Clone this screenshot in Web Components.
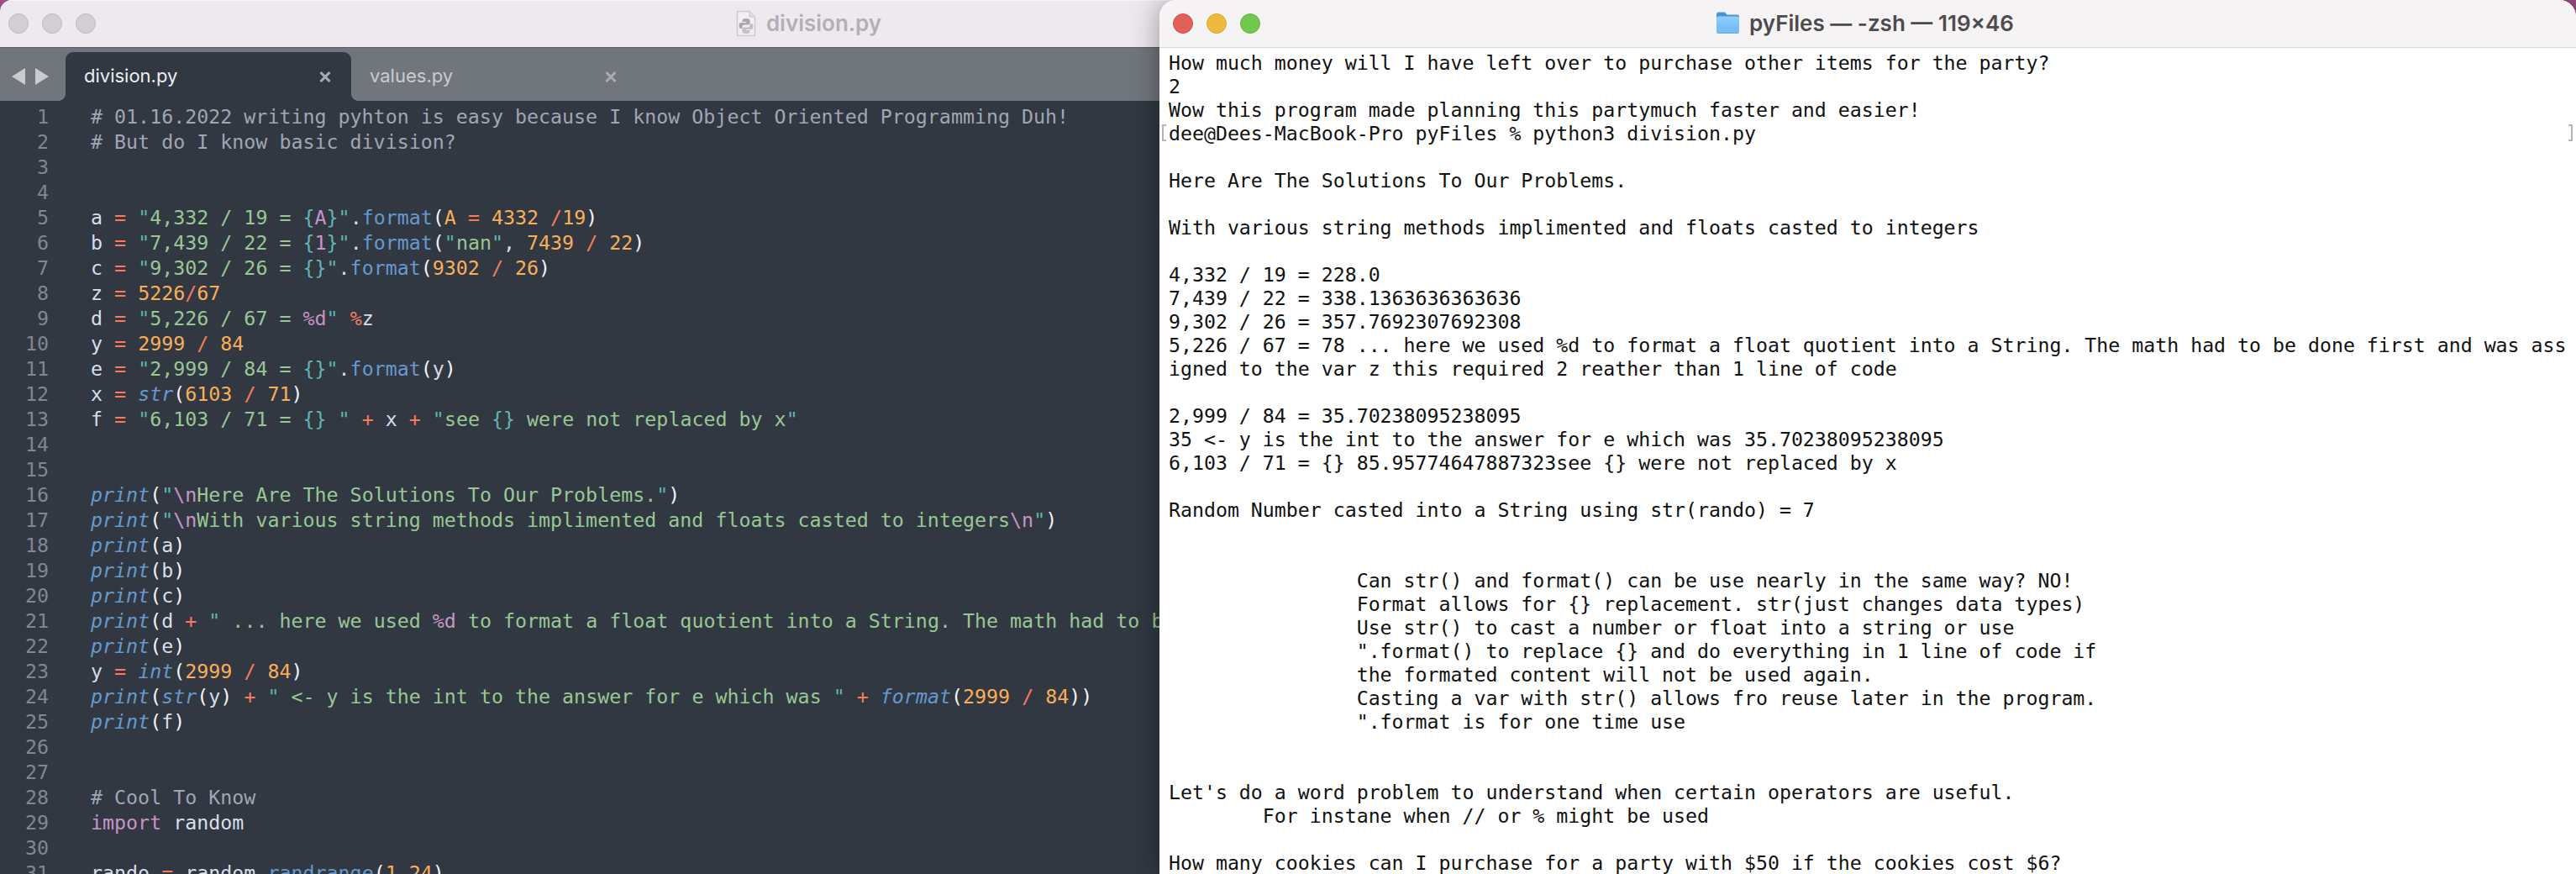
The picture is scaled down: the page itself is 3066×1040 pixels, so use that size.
<!DOCTYPE html>
<html>
<head>
<meta charset="utf-8">
<title>division.py</title>
<style>
  html, body { margin: 0; padding: 0; height: 100%; overflow: hidden; background: #9e4c87; }
</style>
</head>
<body>

<mac-desktop>
  <editor-window file="division.py"></editor-window>
  <terminal-window heading="pyFiles — -zsh — 119×46">How much money will I have left over to purchase other items for the party?
2
Wow this program made planning this partymuch faster and easier!
dee@Dees-MacBook-Pro pyFiles % python3 division.py

Here Are The Solutions To Our Problems.

With various string methods implimented and floats casted to integers

4,332 / 19 = 228.0
7,439 / 22 = 338.1363636363636
9,302 / 26 = 357.7692307692308
5,226 / 67 = 78 ... here we used %d to format a float quotient into a String. The math had to be done first and was ass
igned to the var z this required 2 reather than 1 line of code

2,999 / 84 = 35.70238095238095
35 &lt;- y is the int to the answer for e which was 35.70238095238095
6,103 / 71 = {} 85.95774647887323see {} were not replaced by x

Random Number casted into a String using str(rando) = 7


                Can str() and format() can be use nearly in the same way? NO!
                Format allows for {} replacement. str(just changes data types)
                Use str() to cast a number or float into a string or use
                ".format() to replace {} and do everything in 1 line of code if
                the formated content will not be used again.
                Casting a var with str() allows fro reuse later in the program.
                ".format is for one time use


Let's do a word problem to understand when certain operators are useful.
        For instane when // or % might be used

How many cookies can I purchase for a party with $50 if the cookies cost $6?</terminal-window>
</mac-desktop>

<script>
const MONO = '"DejaVu Sans Mono", "Liberation Mono", monospace';

// ‹x text› = token of class x
const CODE = [
  '‹c # 01.16.2022 writing pyhton is easy because I know Object Oriented Programming Duh!›',
  '‹c # But do I know basic division?›',
  '',
  '',
  '‹v a› ‹o =› ‹q "›‹s 4,332 / 19 = ›‹q {›‹p A›‹q }"›‹v .›‹f format›‹w (›‹n A› ‹o =› ‹n 4332› ‹o /›‹n 19›‹w )›',
  '‹v b› ‹o =› ‹q "›‹s 7,439 / 22 = ›‹q {›‹p 1›‹q }"›‹v .›‹f format›‹w (›‹q "›‹s nan›‹q "›‹v ,› ‹n 7439› ‹o /› ‹n 22›‹w )›',
  '‹v c› ‹o =› ‹q "›‹s 9,302 / 26 = ›‹q {}"›‹v .›‹f format›‹w (›‹n 9302› ‹o /› ‹n 26›‹w )›',
  '‹v z› ‹o =› ‹n 5226›‹o /›‹n 67›',
  '‹v d› ‹o =› ‹q "›‹s 5,226 / 67 = ›‹p %d›‹q "› ‹o %›‹v z›',
  '‹v y› ‹o =› ‹n 2999› ‹o /› ‹n 84›',
  '‹v e› ‹o =› ‹q "›‹s 2,999 / 84 = ›‹q {}"›‹v .›‹f format›‹w (›‹v y›‹w )›',
  '‹v x› ‹o =› ‹i str›‹w (›‹n 6103› ‹o /› ‹n 71›‹w )›',
  '‹v f› ‹o =› ‹q "›‹s 6,103 / 71 = ›‹q {}›‹s  ›‹q "› ‹o +› ‹v x› ‹o +› ‹q "›‹s see ›‹q {}›‹s  were not replaced by x›‹q "›',
  '',
  '',
  '‹i print›‹w (›‹q "›‹p \\n›‹s Here Are The Solutions To Our Problems.›‹q "›‹w )›',
  '‹i print›‹w (›‹q "›‹p \\n›‹s With various string methods implimented and floats casted to integers›‹p \\n›‹q "›‹w )›',
  '‹i print›‹w (›‹v a›‹w )›',
  '‹i print›‹w (›‹v b›‹w )›',
  '‹i print›‹w (›‹v c›‹w )›',
  '‹i print›‹w (›‹v d› ‹o +› ‹q "›‹s  ... here we used ›‹p %d›‹s  to format a float quotient into a String. The math had to be›',
  '‹i print›‹w (›‹v e›‹w )›',
  '‹v y› ‹o =› ‹i int›‹w (›‹n 2999› ‹o /› ‹n 84›‹w )›',
  '‹i print›‹w (›‹i str›‹w (›‹v y›‹w )› ‹o +› ‹q "›‹s  &lt;- y is the int to the answer for e which was ›‹q "› ‹o +› ‹i format›‹w (›‹n 2999› ‹o /› ‹n 84›‹w ))›',
  '‹i print›‹w (›‹v f›‹w )›',
  '',
  '',
  '‹c # Cool To Know›',
  '‹p import› ‹v random›',
  '',
  '‹v rando› ‹o =› ‹v random.›‹f randrange›‹w (›‹n 1›‹v ,›‹n 24›‹w )›',
];

class MacDesktop extends HTMLElement {
  constructor() {
    super();
    this.attachShadow({ mode: 'open' }).innerHTML = `
      <style>
        :host { display: block; position: relative; width: 3066px; height: 1040px; overflow: hidden; background: #9e4c87; }
      </style>
      <slot></slot>`;
  }
}

class TrafficLights extends HTMLElement {
  constructor() {
    super();
    const dim = this.hasAttribute('inactive');
    const col = dim ? ['#d3cfd5', '#d3cfd5', '#d3cfd5'] : ['#e2605a', '#eeba3e', '#72c84f'];
    const edge = dim ? ['#bcb8be', '#bcb8be', '#bcb8be'] : ['#cf4f49', '#d9a633', '#62b542'];
    this.attachShadow({ mode: 'open' }).innerHTML = `
      <style>
        :host { display: flex; gap: 16px; }
        span { width: 24px; height: 24px; border-radius: 50%; box-sizing: border-box; border: 1px solid; }
      </style>
      ${col.map((c, i) => `<span style="background:${c};border-color:${edge[i]}"></span>`).join('')}`;
  }
}

class EditorTab extends HTMLElement {
  constructor() {
    super();
    this.attachShadow({ mode: 'open' }).innerHTML = `
      <style>
        :host { display: flex; align-items: center; box-sizing: border-box; position: relative; width: 340px; height: 58px;
          padding: 0 24px 0 22px; font: 400 22px Inter, "Liberation Sans", sans-serif; color: #c9cbcf; border-radius: 9px 9px 0 0; }
        :host([active]) { background: #313842; color: #eceef0; }
        :host([active])::before, :host([active])::after { content: ""; position: absolute; bottom: 0; width: 8px; height: 8px; }
        :host([active])::before { left: -8px; background: radial-gradient(circle at 0 0, transparent 7.5px, #313842 8px); }
        :host([active])::after { right: -8px; background: radial-gradient(circle at 100% 0, transparent 7.5px, #313842 8px); }
        .name { flex: 1; padding-bottom: 2px; }
        svg { display: block; width: 14px; height: 13px; }
      </style>
      <span class="name"><slot></slot></span>
      <svg viewBox="0 0 14 13"><path d="M1.5 1 L12.5 12 M12.5 1 L1.5 12" stroke="#a9acb1" stroke-width="3" fill="none"/></svg>`;
  }
}

class CodeView extends HTMLElement {
  constructor() {
    super();
    const rows = CODE.map((line, i) => {
      const html = line.replace(/‹(\w) ([^›]*)›/g, '<span class="$1">$2</span>');
      return `<span class="num">${i + 1}</span><span class="src">${html}</span>`;
    }).join('');
    this.attachShadow({ mode: 'open' }).innerHTML = `
      <style>
        :host { display: grid; grid-template-columns: 58px 1fr; column-gap: 50px; grid-auto-rows: 30px; padding-top: 4px;
          flex: 1; min-height: 0; overflow: hidden; background: #313842; font: 23.3px/30px ${MONO}; color: #d8dee9; white-space: pre; }
        .num { text-align: right; color: #818791; }
        .c { color: #a0a6b3; }
        .v { color: #d8dee9; }
        .w { color: #f2f4f7; }
        .o { color: #f97b58; }
        .n { color: #f9ae58; }
        .s { color: #99c794; }
        .q { color: #5fb4b4; }
        .p { color: #c695c6; }
        .f { color: #6699cc; }
        .i { color: #6699cc; font-style: italic; }
      </style>
      ${rows}`;
  }
}

class EditorWindow extends HTMLElement {
  constructor() {
    super();
    const file = this.getAttribute('file');
    this.attachShadow({ mode: 'open' }).innerHTML = `
      <style>
        :host { position: absolute; left: 0; top: 0; width: 1928px; height: 1040px; display: flex; flex-direction: column;
          overflow: hidden; border-radius: 14px 14px 0 0; background: #313842; }
        .title { height: 56px; flex: none; display: flex; align-items: center; justify-content: center; gap: 12px; position: relative;
          background: #eee9ef; border-top: 1px solid #f7f5f8; box-sizing: border-box; padding: 0 3px 2px 0;
          font: 600 26px Inter, "Liberation Sans", sans-serif; color: #b4afb6; }
        traffic-lights { position: absolute; left: 10px; top: 15px; }
        .tabs { height: 64px; flex: none; box-sizing: border-box; display: flex; align-items: flex-end; border-top: 1px solid #595c62; background: #71767d; }
        .nav { width: 78px; height: 58px; flex: none; box-sizing: border-box; display: flex; align-items: center; gap: 12px; padding: 0 0 0 14px; }
        .nav svg { display: block; width: 16px; height: 20px; }
        .doc { width: 24px; height: 32px; flex: none; }
      </style>
      <div class="title">
        <traffic-lights inactive></traffic-lights>
        <svg class="doc" viewBox="0 0 24 32">
          <path d="M1.5 1.5 H16 L22.5 8 V30.5 H1.5 Z" fill="#f1eff2" stroke="#cdc9cf" stroke-width="1.5"/>
          <path d="M16 1.5 V8 H22.5" fill="#e0dde2" stroke="#cdc9cf" stroke-width="1"/>
          <path d="M12 10 c-3 0 -4.5 .8 -4.5 2.5 v1.5 h4.8 v1 h-6.3 c-1.7 0 -2.5 1.5 -2.5 3.5 s.8 3.5 2.5 3.5 h1.5 v-2.2 c0 -1.5 1.2 -2.3 2.6 -2.3 h4.2 c1.3 0 2.2 -.9 2.2 -2.2 v-2.8 c0 -1.5 -1.5 -2.5 -4.5 -2.5 z" fill="#a9a6ac"/>
          <path d="M12 28 c3 0 4.5 -.8 4.5 -2.5 v-1.5 h-4.8 v-1 h6.3 c1.7 0 2.5 -1.5 2.5 -3.5 s-.8 -3.5 -2.5 -3.5 h-1.5 v2.2 c0 1.5 -1.2 2.3 -2.6 2.3 h-4.2 c-1.3 0 -2.2 .9 -2.2 2.2 v2.8 c0 1.500 1.5 2.5 4.5 2.5 z" fill="#c3c0c6"/>
        </svg>
        <span>${file}</span>
      </div>
      <div class="tabs">
        <div class="nav">
          <svg viewBox="0 0 16 20"><path d="M16 0 V20 L0 10 Z" fill="#c9cbcd"/></svg>
          <svg viewBox="0 0 16 20"><path d="M0 0 V20 L16 10 Z" fill="#c9cbcd"/></svg>
        </div>
        <editor-tab active>${file}</editor-tab>
        <editor-tab>values.py</editor-tab>
      </div>
      <code-view></code-view>`;
  }
}

class TerminalWindow extends HTMLElement {
  constructor() {
    super();
    this.attachShadow({ mode: 'open' }).innerHTML = `
      <style>
        :host { position: absolute; left: 1380px; top: 0; width: 1686px; height: 1040px; display: flex; flex-direction: column;
          overflow: hidden; border-radius: 20px 20px 0 0; background: #fff; box-shadow: 0 0 34px rgba(0,0,0,.38); }
        .title { height: 57px; flex: none; box-sizing: border-box; display: flex; align-items: center; justify-content: center; gap: 11px; position: relative;
          background: #f6f3f5; border-bottom: 1px solid #d9d7d9; padding: 0 7px 2px 0;
          font: 600 26px Inter, "Liberation Sans", sans-serif; color: #4d4b4d; }
        traffic-lights { position: absolute; left: 16px; top: 16px; }
        .folder { width: 29px; height: 28px; flex: none; }
        .body { flex: 1; min-height: 0; overflow: hidden; position: relative; box-sizing: border-box; padding: 4px 0 0 11px;
          font: 23.23px/28px ${MONO}; color: #111; white-space: pre; }
        .mark { position: absolute; top: 91px; width: 5px; height: 20px; border: 2px solid #b4b4b4; box-sizing: border-box; }
        .mark.l { left: 3px; border-right: 0; }
        .mark.r { right: 4px; border-left: 0; }
      </style>
      <div class="title">
        <traffic-lights></traffic-lights>
        <svg class="folder" viewBox="0 0 29 28">
          <defs><linearGradient id="fg" x1="0" y1="0" x2="0" y2="1"><stop offset="0" stop-color="#92d0fa"/><stop offset="1" stop-color="#69b3f2"/></linearGradient></defs>
          <path d="M1 4 a2.5 2.5 0 0 1 2.5 -2.5 h6.5 a2.5 2.5 0 0 1 2 1 l1.5 2 h12 a2.5 2.5 0 0 1 2.5 2.5 v4 H1 Z" fill="#4b93d6"/>
          <rect x="1" y="6.5" width="27" height="20.5" rx="2.5" fill="url(#fg)"/>
          <path d="M1.5 22.5 H27.5 M1.5 24.5 H27.5" stroke="#8cc6f6" stroke-width=".8"/>
        </svg>
        <span>${this.getAttribute('heading')}</span>
      </div>
      <div class="body"><slot></slot><div class="mark l"></div><div class="mark r"></div></div>`;
  }
}

customElements.define('mac-desktop', MacDesktop);
customElements.define('traffic-lights', TrafficLights);
customElements.define('editor-tab', EditorTab);
customElements.define('code-view', CodeView);
customElements.define('editor-window', EditorWindow);
customElements.define('terminal-window', TerminalWindow);
</script>
</body>
</html>
